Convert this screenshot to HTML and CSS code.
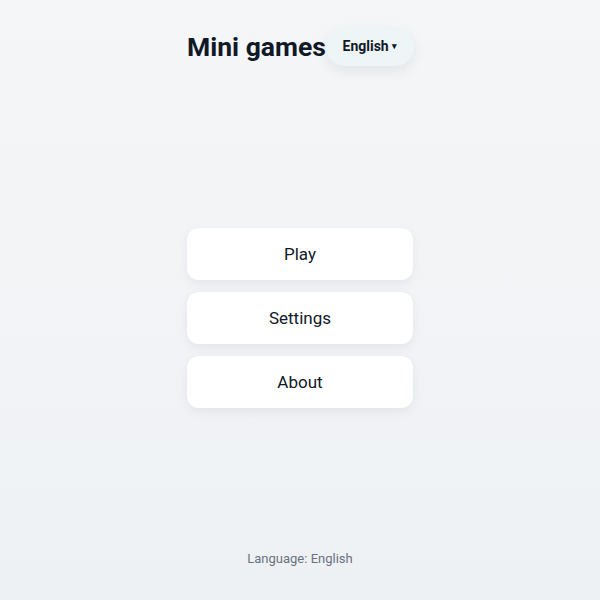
FILE: index.html
```html
<!DOCTYPE html>
<html lang="en">
<head>
<meta charset="utf-8">
<title>Mini games</title>
<link rel="stylesheet" href="styles.css">
</head>
<body>
<div class="page">
  <header class="header">
    <h1 class="title">Mini games</h1>
    <button class="lang">English <span class="caret">▾</span></button>
  </header>
  <main class="menu">
    <button class="item">Play</button>
    <button class="item">Settings</button>
    <button class="item">About</button>
  </main>
  <footer class="footer">Language: English</footer>
</div>
</body>
</html>
```
FILE: styles.css
```css
* { box-sizing: border-box; }
html, body { margin: 0; padding: 0; }
body {
  font-family: Roboto, "Liberation Sans", sans-serif;
  background: linear-gradient(180deg, #f5f6f8 0%, #eef1f4 100%);
  color: #111827;
}
.page {
  height: 600px;
  display: flex;
  flex-direction: column;
  align-items: center;
}
.header {
  width: 226px;
  margin-top: 28px;
  height: 38px;
  display: flex;
  align-items: center;
  justify-content: space-between;
}
.title {
  margin: 0;
  font-size: 26.5px;
  font-weight: 700;
  line-height: 38px;
  color: #111827;
  white-space: nowrap;
}
.lang {
  height: 38px;
  width: 88px;
  padding: 0 0 3px 0;
  border: none;
  border-radius: 19px;
  background: #eef5f7;
  box-shadow: 0 5px 14px rgba(15, 23, 42, 0.08);
  font-family: Roboto, "Liberation Sans", sans-serif;
  font-size: 14px;
  font-weight: 700;
  color: #111827;
  white-space: nowrap;
  flex-shrink: 0;
}
.caret { font-size: 9px; vertical-align: 2px; }
.menu {
  margin-top: 162px;
  width: 226px;
  display: flex;
  flex-direction: column;
  gap: 12px;
}
.item {
  height: 52px;
  border: none;
  border-radius: 12px;
  background: #ffffff;
  box-shadow: 0 4px 12px rgba(15, 23, 42, 0.06);
  font-family: Roboto, "Liberation Sans", sans-serif;
  font-size: 17px;
  color: #111827;
}
.footer {
  margin-top: auto;
  padding-bottom: 31px;
  font-size: 13px;
  line-height: 20px;
  color: #6b7280;
}
```
